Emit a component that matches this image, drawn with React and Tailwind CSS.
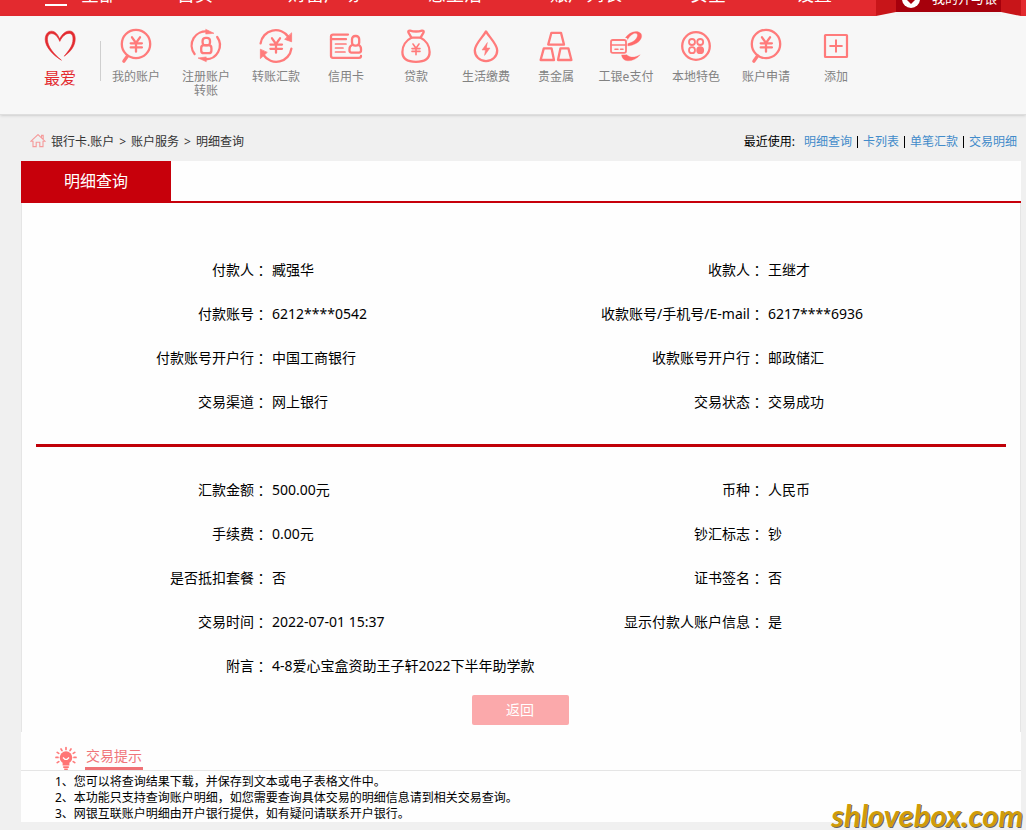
import React from "react";

const stroke = {
  fill: "none",
  stroke: "#ff7b7b",
  strokeWidth: 2.3,
  strokeLinecap: "round",
  strokeLinejoin: "round",
};

function Svg({ children }) {
  return (
    <svg className="size-9 shrink-0" viewBox="0 0 36 36" aria-hidden="true" {...stroke}>
      {children}
    </svg>
  );
}

const yen = "M14 9.3 L18 15 L22 9.3 M18 15 V23.7 M12.7 15.3 H23.9 M12.7 19.4 H23.9";

const MagnifierYen = () => (
  <Svg>
    <circle cx="18" cy="16" r="14.2" />
    <path d="M9.5 28 L5.8 33.2" strokeWidth="3.2" />
    <path d={yen} />
  </Svg>
);

const Register = () => (
  <Svg>
    <path d="M6.6 26 A14 14 0 0 1 20 3.6" />
    <path d="M29.2 9 A14 14 0 0 1 17 31.2" />
    <path d="M18 1.4 L26 5.3 L18 6 Z M18 33.6 L10 30 L18 29 Z" fill="#ff7b7b" strokeWidth="0.6" />
    <rect x="14.6" y="9.8" width="7.4" height="7.6" rx="3" />
    <rect x="13.2" y="17.2" width="10.2" height="8" rx="2.8" />
  </Svg>
);

const Transfer = () => (
  <Svg>
    <path d="M2.6 15.4 A15.3 15.3 0 0 1 30.5 9" />
    <path d="M33.4 20.6 A15.3 15.3 0 0 1 5.5 27" />
    <path d="M33.6 5.2 V13.8 L27 11.4 Z M2.4 21.6 V30.6 L9 24.6 Z" fill="#ff7b7b" strokeWidth="0.8" />
    <path d="M14 10.3 L18 16 L22 10.3 M18 16 V24.7 M12.4 16.6 H24 M12.4 20.8 H24" />
  </Svg>
);

const CreditCard = () => (
  <Svg>
    <path d="M20 6.6 H5 Q3 6.6 3 8.6 V27.8 Q3 29.8 5 29.8 H31 Q33 29.8 33 28" />
    <path d="M3 11.2 H18" />
    <path d="M7.5 16 H18 M7.5 20 H15 M7.5 24 H17" strokeWidth="1.7" />
    <rect x="24" y="8" width="7.2" height="9.6" rx="3.2" />
    <path d="M24.3 17 Q21.5 18 21.5 21 V22.6 Q21.5 24.6 23.5 24.6 H31 Q33 24.6 33 22.6 V21 Q33 18 30.5 17" />
  </Svg>
);

const MoneyBag = () => (
  <Svg>
    <path d="M13.4 9.6 L10.4 4.4 Q9.8 2.4 12 2.6 Q18 4.4 24 2.6 Q26.2 2.4 25.6 4.4 L22.6 9.6 Z" />
    <path d="M13.4 9.8 C8 12.4 4.4 18 4.4 24 C4.4 31 9.6 33.8 18 33.8 C26.4 33.8 31.6 31 31.6 24 C31.6 18 28 12.4 22.6 9.8" />
    <path d="M15 16 L18 20.2 L21 16 M18 20.2 V26.8 M14 20.6 H22 M14 23.4 H22" strokeWidth="1.6" />
  </Svg>
);

const Drop = () => (
  <Svg>
    <path d="M18 3.4 C21 9 29.2 16 29.2 22.4 A11.2 10.8 0 0 1 6.8 22.4 C6.8 16 15 9 18 3.4 Z" />
    <path d="M19.2 14.8 L14 22 H17.4 L16.6 27.4 L22 20 H18.6 Z" fill="#ff7b7b" strokeWidth="0.5" />
  </Svg>
);

const Gold = () => (
  <Svg>
    <path d="M13.4 4.8 H23 L26 16.6 H10.2 Z M5.8 20.4 H13.6 L16 32 H2.6 Z M22.4 20.4 H30.4 L33.4 32 H20 Z" />
  </Svg>
);

const EPay = () => (
  <Svg>
    <path
      d="M14 22 C13.6 13 19 4 28 3.6 C32 3.6 34.2 6 33.6 9 C32.6 14 26 17.6 19 18 L18.4 16 C24.6 14.8 29 11.4 29.4 7.6 C29.6 5.4 27.6 4.8 25.4 5.8 C20 8.4 16.8 16 17.2 22 C17.4 28.6 24 31.4 32.2 26.8 C28.6 31 24 33 19.6 32.8 C14.4 32.4 12.4 28 14 22 Z"
      fill="#ff6b6b"
      strokeWidth="0.3"
    />
    <rect x="1.4" y="9.8" width="18.2" height="17" rx="2" fill="#f7f7f7" stroke="none" />
    <rect x="3" y="12" width="15" height="12.8" rx="1.8" strokeWidth="1.8" />
    <path d="M3 17 H18 M7 21.2 H10 M12.6 21.2 H15" strokeWidth="1.6" />
  </Svg>
);

const Local = () => (
  <Svg>
    <circle cx="18" cy="18" r="13.8" />
    <circle cx="14" cy="14" r="3" strokeWidth="1.8" />
    <circle cx="22.2" cy="14" r="3" strokeWidth="1.8" />
    <circle cx="14" cy="22.2" r="3" strokeWidth="1.8" />
    <circle cx="22.2" cy="22.2" r="3" strokeWidth="1.8" fill="#ff7b7b" />
  </Svg>
);

const Add = () => (
  <Svg>
    <rect x="7" y="7" width="22" height="22" rx="0.5" strokeWidth="2.2" />
    <path d="M11.4 18 H24.6 M18 11.4 V24.6" strokeWidth="2" strokeLinecap="butt" />
  </Svg>
);

const Heart = () => (
  <svg className="size-9" viewBox="0 0 36 36" aria-hidden="true">
    <path
      fill="#e32a2f"
      stroke="#e32a2f"
      strokeWidth="0.6"
      d="M17.6 11 C20 6 23.6 3 27.4 3 C31 3 33.2 6 33.2 11 C33.2 18 28.4 24 22.2 28.2 C26.4 23 31 18 31 11 C31 7 29.4 5.4 27 5.4 C23.6 5.4 20 8.6 17.8 13.4 C15.6 8.4 13 5.6 9.6 5.6 C6.8 5.6 5.4 8 5.4 11.2 C5.6 19 12 26 19.4 32.2 C11 27 3.2 19 3.2 11.4 C3.2 6.6 5.8 3.2 9.6 3.2 C13 3.2 16 6.4 17.6 11 Z"
    />
  </svg>
);

const tools = [
  ["我的账户", MagnifierYen],
  ["注册账户转账", Register],
  ["转账汇款", Transfer],
  ["信用卡", CreditCard],
  ["贷款", MoneyBag],
  ["生活缴费", Drop],
  ["贵金属", Gold],
  ["工银e支付", EPay],
  ["本地特色", Local],
  ["账户申请", MagnifierYen],
  ["添加", Add],
];

const parties = [
  ["付款人", "臧强华"],
  ["收款人", "王继才"],
  ["付款账号", "6212****0542"],
  ["收款账号/手机号/E-mail", "6217****6936"],
  ["付款账号开户行", "中国工商银行"],
  ["收款账号开户行", "邮政储汇"],
  ["交易渠道", "网上银行"],
  ["交易状态", "交易成功"],
];

const amounts = [
  ["汇款金额", "500.00元"],
  ["币种", "人民币"],
  ["手续费", "0.00元"],
  ["钞汇标志", "钞"],
  ["是否抵扣套餐", "否"],
  ["证书签名", "否"],
  ["交易时间", "2022-07-01 15:37"],
  ["显示付款人账户信息", "是"],
  ["附言", "4-8爱心宝盒资助王子轩2022下半年助学款"],
];

const recent = ["明细查询", "卡列表", "单笔汇款", "交易明细"];

function Details({ rows }) {
  return (
    <dl className="grid grid-cols-2 pl-0.5 pr-1 text-sm text-black">
      {rows.map(([label, value]) => (
        <div key={label} className="grid h-11 grid-cols-2 items-center whitespace-nowrap">
          <dt className="flex justify-end pr-1">
            {label}
            <span className="font-['Noto_Sans_CJK_TC',sans-serif]" lang="zh-TW">：</span>
          </dt>
          <dd>{value}</dd>
        </div>
      ))}
    </dl>
  );
}

function TopBar() {
  return (
    <header className="flex h-4 items-end overflow-hidden bg-[#e32a2f] text-white">
      <nav className="flex grow items-end whitespace-nowrap pb-2.5 pl-[45px] text-lg/6">
        <a href="#all" className="flex w-[132px] items-end gap-3.5">
          <svg className="h-4 w-[22px] overflow-visible" viewBox="0 0 22 16" aria-hidden="true">
            <path d="M0 3H22M0 9H22M0 15H22" stroke="#fff" strokeWidth="2" />
          </svg>
          全部
        </a>
        <a href="#home" className="w-[111px]">首页</a>
        <a href="#wealth" className="w-[140px]">财富广场</a>
        <a href="#life" className="w-[122px]">惠生活</a>
        <a href="#accounts" className="w-[140px]">账户列表</a>
        <a href="#security" className="w-[106px]">安全</a>
        <a href="#settings">设置</a>
      </nav>
      <div className="mr-[5px] flex h-4 shrink-0 items-start bg-[#f4f4f4]">
        <svg className="h-4 w-5" viewBox="0 0 20 16" aria-hidden="true">
          <path d="M0 0H20V16H0Z" fill="#f7f7f7" />
          <path d="M0 0H20V12L0 16Z" fill="#c81519" />
        </svg>
        <a href="#mine" className="flex h-3 w-[105px] items-end gap-3 bg-[#a6000c] pl-1.5 text-[13px]/4">
          <svg className="mb-1 h-5 w-[18px]" viewBox="0 0 18 20" aria-hidden="true">
            <circle cx="9" cy="11" r="9" fill="#fff" />
            <path d="M7.5 9H10.5V12H13L9 16L5 12H7.5Z" fill="#a6000c" />
          </svg>
          <span className="mb-1.5 whitespace-nowrap">我的开与银</span>
        </a>
        <svg className="h-4 w-5" viewBox="0 0 20 16" aria-hidden="true">
          <path d="M0 0H20V16H0Z" fill="#f7f7f7" />
          <path d="M0 0H20V16L0 12Z" fill="#c81519" />
        </svg>
      </div>
    </header>
  );
}

function Toolbar() {
  return (
    <nav className="flex h-[99px] items-start border-b border-[#dedede] bg-[#f7f7f7] pl-[25px] pt-3 shadow-sm">
      <a href="#favourites" className="flex w-[70px] flex-col items-center gap-1 text-base/5 text-[#e32a2f]">
        <Heart />
        最爱
      </a>
      <span className="ml-[5px] mt-[13px] h-10 w-px bg-[#cfcfcf]" />
      {tools.map(([label, Icon]) => (
        <a
          key={label}
          href={"#" + label}
          className="flex w-[70px] flex-col items-center gap-1.5 text-center text-xs/[14px] text-[#828282]"
        >
          <Icon />
          <span className="max-w-[60px] px-px">{label}</span>
        </a>
      ))}
    </nav>
  );
}

export default function App() {
  return (
    <div className="relative min-h-screen bg-[#f0f0f0] pb-[9px] font-['Noto_Sans','Noto_Sans_CJK_SC',sans-serif]">
      <TopBar />
      <Toolbar />

      <div className="flex h-[46px] items-center justify-between whitespace-nowrap pb-px pl-[30px] pr-[9px] pt-2 text-xs text-[#333]">
        <nav className="flex items-center gap-[5px]">
          <svg className="size-4" viewBox="0 0 16 16" fill="none" stroke="#f59a9a" strokeWidth="1.1" aria-hidden="true">
            <path d="M1 7.2 L8 0.6 L15 7.2 H13 V12.6 H9.8 V8.2 H6.2 V12.6 H3 V7.2 Z M11.6 3.6 V1.4 H13.2 V5" />
          </svg>
          <a href="#cards">银行卡.账户</a>
          <span>&gt;</span>
          <a href="#services">账户服务</a>
          <span>&gt;</span>
          <a href="#details">明细查询</a>
        </nav>
        <div className="flex items-center gap-[5px] text-black">
          <span className="mr-1">最近使用:</span>
          {recent.map((name, i) => (
            <React.Fragment key={name}>
              {i > 0 && <span className="h-3 w-px bg-black" />}
              <a href={"#" + name} className="text-[#428bca]">{name}</a>
            </React.Fragment>
          ))}
        </div>
      </div>

      <main className="ml-[21px] mr-[5px] bg-[#fefefe]">
        <div className="flex border-b-2 border-[#c7000b]">
          <h1 className="flex h-10 w-[150px] items-center justify-center bg-[#c7000b] text-base text-white">
            明细查询
          </h1>
        </div>

        <section className="border-x border-[#e5e5e5] pb-[7px] pt-[45px]">
          <Details rows={parties} />
          <hr className="mx-3.5 mb-[21px] mt-5 h-[3px] border-0 bg-[#c00008]" />
          <Details rows={amounts} />
          <div className="mt-[7px] flex justify-center pr-0.5">
            <button type="button" className="h-[30px] w-[97px] rounded-xs bg-[#fba9ab] text-sm text-white">
              返回
            </button>
          </div>
        </section>

        <section>
          <div className="flex h-[39px] items-end gap-2 border-b border-[#e5e5e5] pl-[34px]">
            <svg className="h-6 w-[22px]" viewBox="0 0 22 24" aria-hidden="true">
              <g stroke="#ff7b7b" strokeWidth="1.7" strokeLinecap="round">
                <path d="M11 1.6V3.4M6 3L7 4.6M16 3L15 4.6M2.2 6.4L3.8 7.4M19.8 6.4L18.2 7.4M1 11.4H3M19 11.4H21M2.2 16.6L3.8 15.6M19.8 16.6L18.2 15.6" />
              </g>
              <circle cx="11" cy="11.6" r="6.3" fill="#ff7575" />
              <path d="M7.6 17H14.4V19.4H7.6ZM8.2 20.2H13.8V22H8.2ZM9.2 22.6H12.8V24H9.2Z" fill="#ff7575" />
              <path d="M8 11.4L10 13.4H12L14 11.4" fill="none" stroke="#fff" strokeWidth="1.4" />
            </svg>
            <h2 className="border-b-3 border-[#ef7276] px-px pb-px text-sm/5 text-[#f0757a]">交易提示</h2>
          </div>
          <ol className="pl-[34px] pt-[3px] text-xs/4 text-black">
            <li>1、您可以将查询结果下载，并保存到文本或电子表格文件中。</li>
            <li>2、本功能只支持查询账户明细，如您需要查询具体交易的明细信息请到相关交易查询。</li>
            <li>3、网银互联账户明细由开户银行提供，如有疑问请联系开户银行。</li>
          </ol>
        </section>
      </main>

      <span className="absolute bottom-0 right-[3px] font-['Lato',sans-serif] text-[31px]/8 font-bold italic text-[#d09c08] [text-shadow:1px_1px_0_#666]">
        shlovebox.com
      </span>
    </div>
  );
}
